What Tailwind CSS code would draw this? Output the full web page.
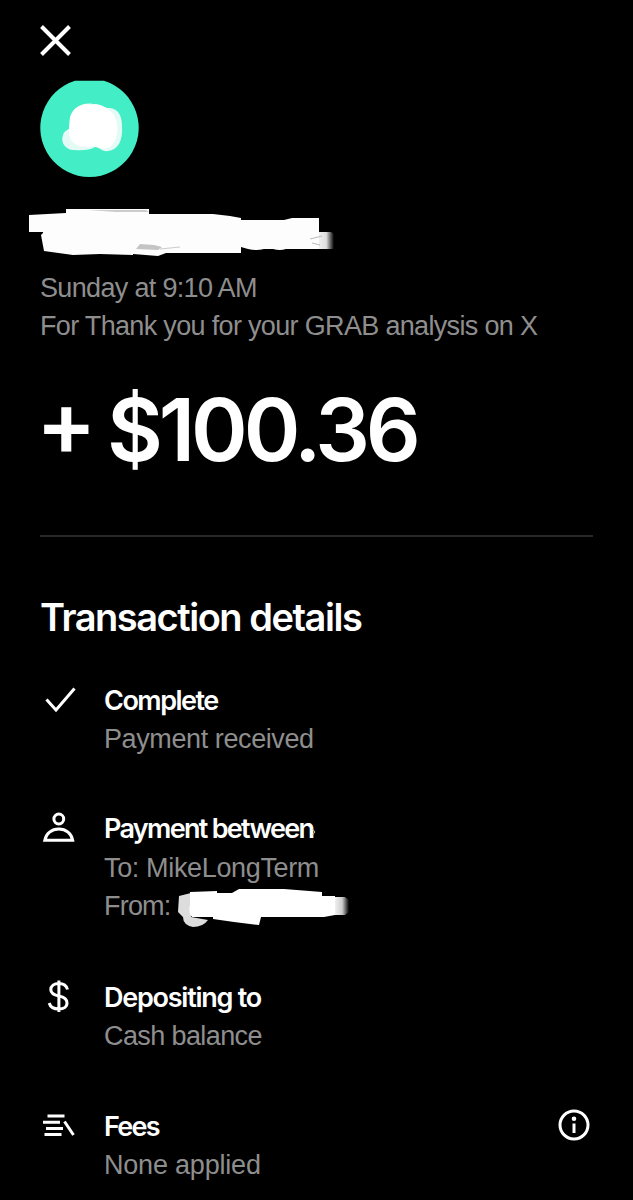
<!DOCTYPE html>
<html lang="en">
<head>
    <meta charset="UTF-8">
    <meta name="viewport" content="width=device-width, initial-scale=1.0">
    <title>Transaction details</title>
    <script src="https://cdn.jsdelivr.net/npm/@tailwindcss/browser@4"></script>
</head>
<body class="bg-black text-white font-['Inter','Liberation_Sans',sans-serif] overflow-hidden">
    <main class="w-[633px] h-[1200px] pl-10 pr-10 pt-[25px] flex flex-col overflow-hidden">
        <!-- close -->
        <button class="w-8 h-8 shrink-0" aria-label="Close">
            <svg class="w-8 h-8" viewBox="0 0 32 32" fill="none" stroke="#fff" stroke-width="4"><path d="M1.5 1.5 29.5 29.5M29.5 1.5 1.5 29.5"/></svg>
        </button>

        <!-- avatar -->
        <svg class="w-[100px] h-[100px] mt-[23px] shrink-0" viewBox="0 0 100 100">
            <path d="M35 .8H64A49.2 49.2 0 1 1 35 .8Z" fill="#43edc5"/>
            <circle cx="34" cy="59" r="11" fill="#e4fbf5"/>
            <path d="M32 36C34 27 44 22 53 24C61 23 65 29 70 28C79 29 82 37 82 46C83 61 78 70 68 71C62 72 59 67 55 67C49 71 37 71 29 69C23 66 21 61 23 55C24 51 28 50 30 48Z" fill="#e4fbf5"/>
            <path d="M30 37C33 27 42 22 52 25C61 23 69 29 74 35C80 46 78 61 70 67C63 71 59 66 53 66C46 69 35 66 31 60C28 54 29 46 30 37Z" fill="#fff"/>
        </svg>

        <!-- hidden name -->
        <svg class="w-[310px] h-12 -ml-3 mt-[23px] shrink-0 overflow-visible" viewBox="0 0 310 48">
            <defs>
                <linearGradient id="fade"><stop offset="0" stop-color="#fff"/><stop offset=".65" stop-color="#ddd"/><stop offset="1" stop-color="#000"/></linearGradient>
            </defs>
            <path d="M286 30 291 29 303 29 306 31V46H284Z" fill="url(#fade)"/>
            <path d="M1 12 38 10V6H121V11L185 11 202 13 213 15V17H256L264 15H291V46L258 46Q252 48 245 46L236 46Q228 48 220 46L213 44V50H138L130 53 105 51V52L72 51 45 52 16 48 13 32 15 30V29H1Z" fill="#fdfdfd"/>
            <path d="M60 7H118L121 9 88 9Z" fill="#ccc"/>
            <path d="M112 41 126 42 134 44 130 47 108 46Z" fill="#c4c4c4"/>
            <path d="M132 46 152 44" stroke="#ccc"/>
            <path d="M282 36 294 33M284 40 292 42" stroke="#bbb"/>
        </svg>

        <div class="mt-[17.5px] font-['Liberation_Sans',sans-serif] text-[27px] leading-[38.5px] tracking-[-0.67px] text-[#8e8e8e] whitespace-nowrap">
            <p>Sunday at 9:10 AM</p>
            <p>For Thank you for your GRAB analysis on X</p>
        </div>

        <p class="mt-8 flex h-[104px] items-center text-[86px] font-semibold leading-[104px] tracking-[-4.1px] whitespace-nowrap"><span class="w-[67px] shrink-0 -ml-1 mr-1 -mt-3.5 text-[90px]">+</span><span>$100.36</span></p>

        <hr class="mt-[53.5px] border-0 h-[2px] shrink-0 bg-[#282828]">

        <h1 class="mt-[56px] text-[38px] leading-[48px] font-semibold tracking-[-1.47px] whitespace-nowrap">Transaction details</h1>

        <ul class="mt-[40.5px] flex flex-col gap-[52.2px] text-[27px] leading-[38.3px] text-[#8e8e8e] whitespace-nowrap">
            <li class="flex">
                <svg class="w-10 h-10 mr-6 -mt-px shrink-0" viewBox="0 0 40 40" fill="none" stroke="#fff" stroke-width="3"><path d="M6.5 18.5 16 29 34.5 7.5"/></svg>
                <div class="font-['Liberation_Sans',sans-serif] tracking-[-0.4px]">
                    <h2 class="font-['Inter',sans-serif] text-white font-semibold tracking-[-1.5px]">Complete</h2>
                    <p>Payment received</p>
                </div>
            </li>
            <li class="flex">
                <svg class="w-10 h-10 mr-6 -mt-[1.5px] shrink-0" viewBox="0 0 40 40" fill="none" stroke="#fff" stroke-width="3"><circle cx="18.8" cy="10" r="4.9"/><path d="M4.8 31.2H32.7C31.5 24.5 26 20 18.8 20S6 24.5 4.8 31.2Z"/></svg>
                <div class="font-['Liberation_Sans',sans-serif] tracking-[-0.35px]">
                    <h2 class="flex font-['Inter',sans-serif] text-white font-semibold tracking-[-1.7px]">Payment between<svg class="w-1 h-10 -mb-2 -ml-px" viewBox="0 0 4 40"><path d="M.5 19 3 22 .5 25" fill="none" stroke="#bbb"/></svg></h2>
                    <p>To: MikeLongTerm</p>
                    <p class="flex"><span class="w-[70px] tracking-[-0.8px]">From:</span>
                        <svg class="w-[180px] h-10 shrink-0" viewBox="0 0 180 40">
                            <defs>
                                <linearGradient id="fade2"><stop offset="0" stop-color="#fff"/><stop offset=".6" stop-color="#ccc"/><stop offset="1" stop-color="#000"/></linearGradient>
                            </defs>
                            <path d="M158 10H171L175 13V25L171 28H158Z" fill="url(#fade2)"/>
                            <path d="M5 9 17 6V30L34 33Q29 40 19 40 9 38 9 30L4 25Z" fill="#ddd"/>
                            <path d="M16 5 43 4V6H58L65 2 110 2 148 5V9H161V28L150 30H87L85 38 60 35 39 32V30H18Q14 26 16 18Z" fill="#fff"/>
                        </svg>
                    </p>
                </div>
            </li>
            <li class="flex">
                <svg class="w-10 h-10 mr-6 -mt-[1.5px] shrink-0" viewBox="0 0 40 40" fill="none" stroke="#fff" stroke-width="3"><path d="M18.9 2.5V34M27.5 11.5C26.5 7.5 23.5 5.5 18.9 5.5C14 5.5 10.8 8 10.8 11.8C10.8 15.5 14 17 18.9 18C24 19 27 21 27 25C27 29 23.5 31 18.9 31C13.5 31 10.3 29 9.2 25"/></svg>
                <div class="font-['Liberation_Sans',sans-serif] tracking-[-0.6px]">
                    <h2 class="font-['Inter',sans-serif] text-white font-semibold tracking-[-1.25px]">Depositing to</h2>
                    <p>Cash balance</p>
                </div>
            </li>
            <li class="flex">
                <svg class="w-10 h-10 mr-6 -mt-px shrink-0" viewBox="0 0 40 40" fill="none" stroke="#fff" stroke-width="3"><path d="M7.5 9H24.5M3 15.2H20M6 21.5H23M4.5 27.5H21.5M24.5 14.5 33.5 28"/></svg>
                <div class="font-['Liberation_Sans',sans-serif] tracking-[-0.2px]">
                    <h2 class="font-['Inter',sans-serif] text-white font-semibold tracking-[-1.7px]">Fees</h2>
                    <p>None applied</p>
                </div>
                <svg class="w-8 h-8 ml-auto mr-[3.5px] mt-px shrink-0" viewBox="0 0 32 32" fill="none" stroke="#fff" stroke-width="3"><circle cx="16" cy="16" r="14"/><path d="M16 14.5V24"/><circle cx="16" cy="9.8" r="2.3" fill="#fff" stroke="none"/></svg>
            </li>
        </ul>
    </main>
</body>
</html>
